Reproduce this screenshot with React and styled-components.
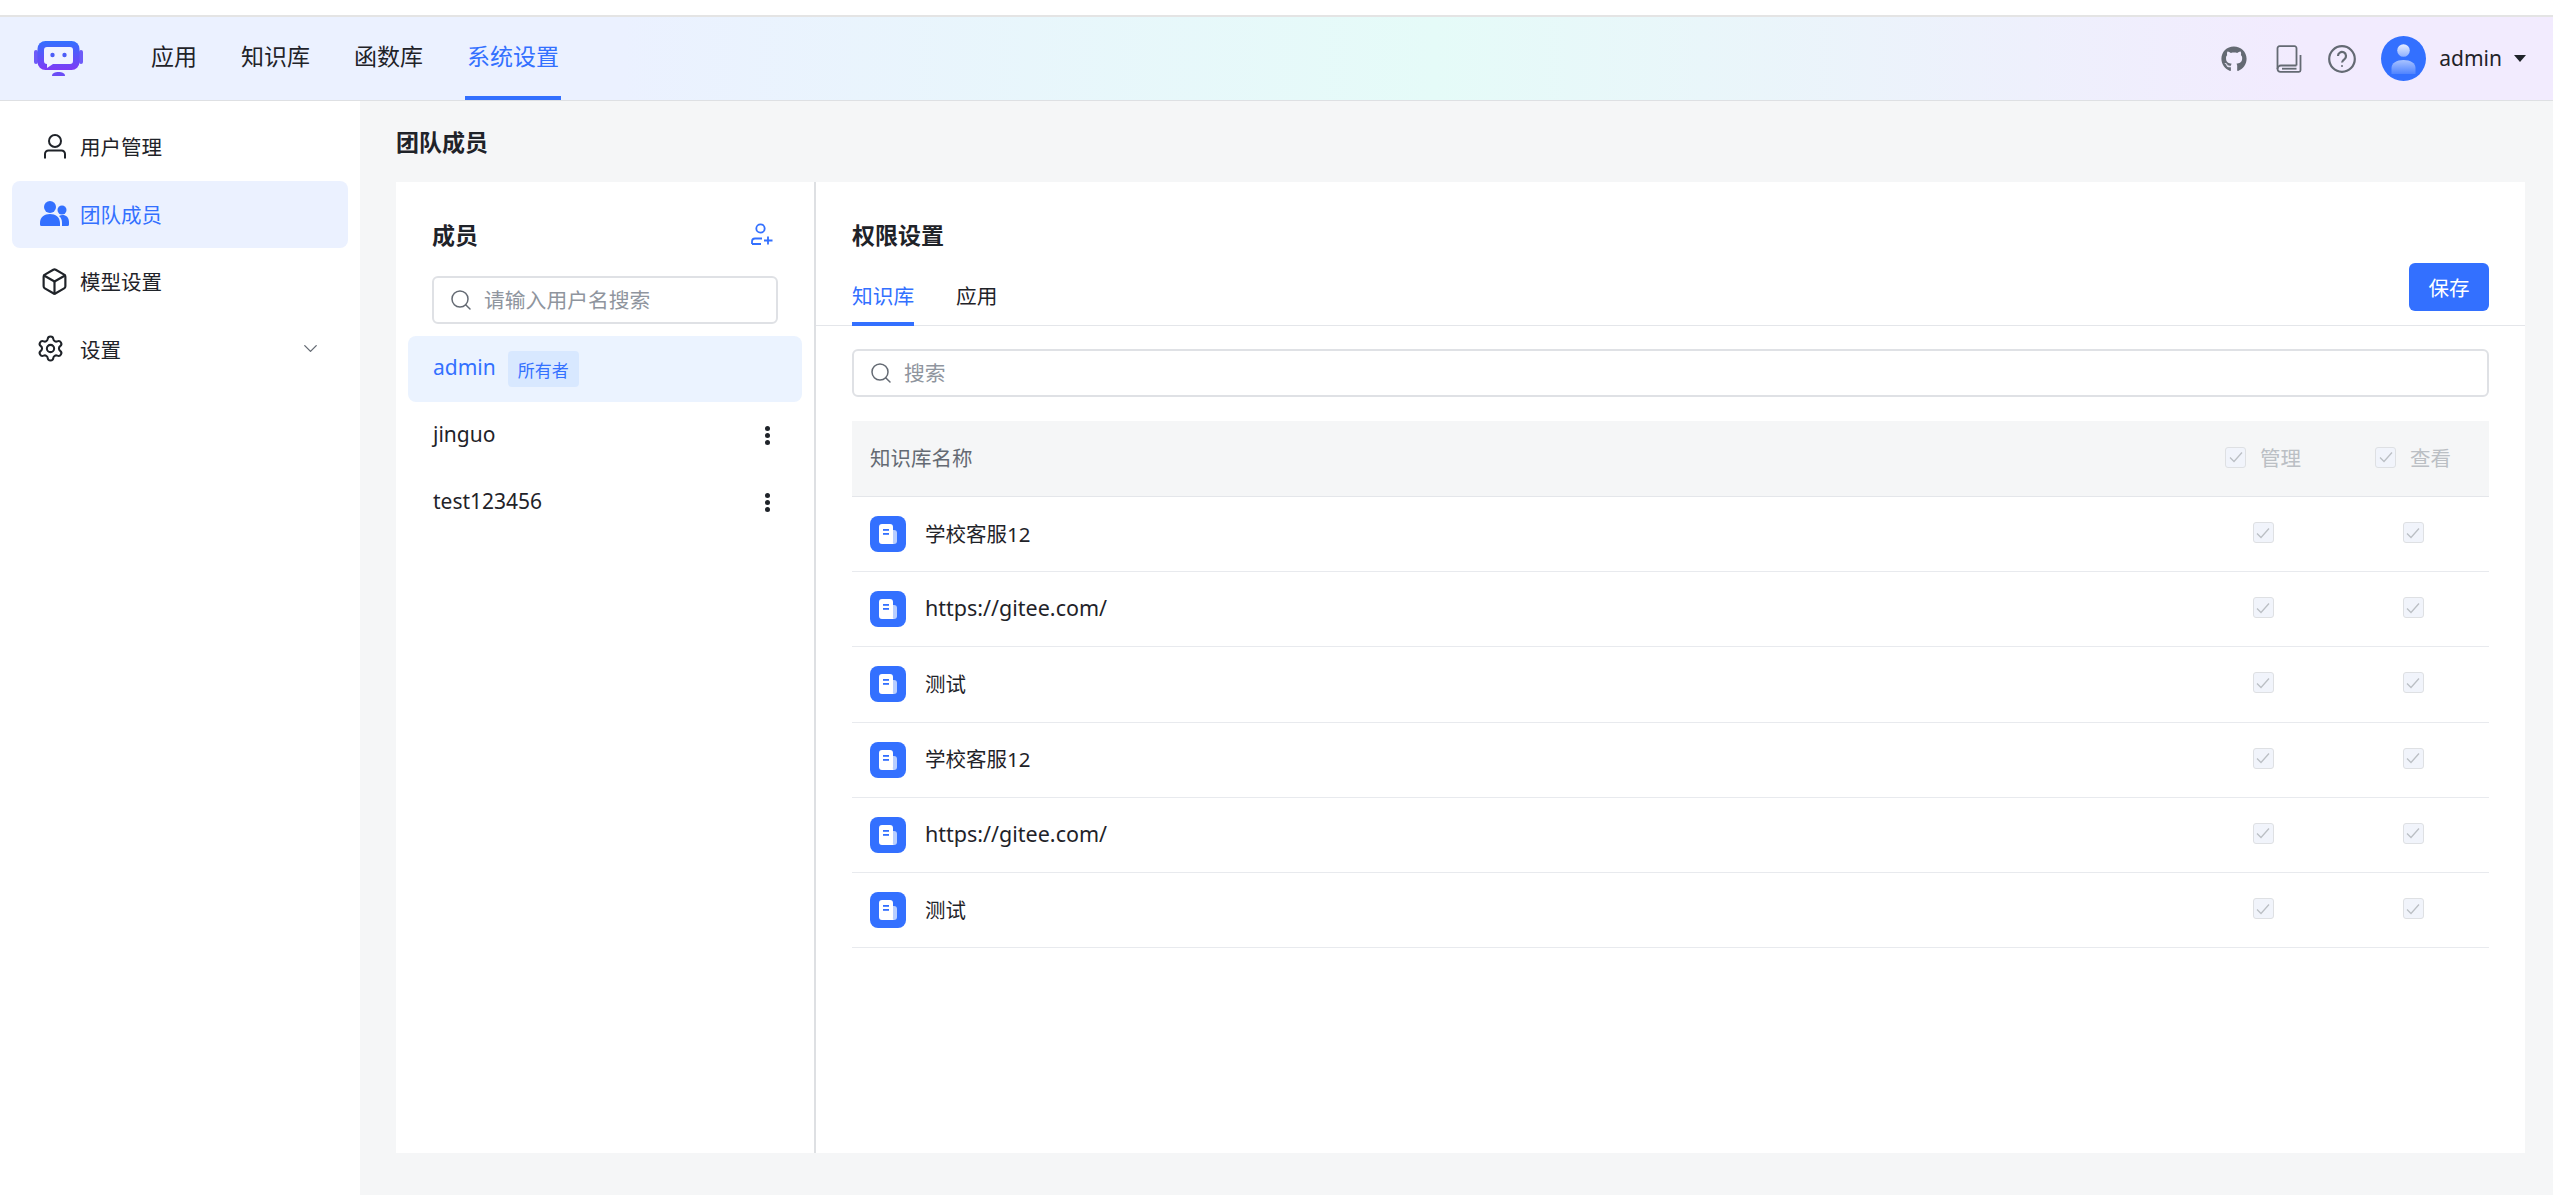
import React from 'react';
import styled, { createGlobalStyle } from 'styled-components';
import { FaGithub } from 'react-icons/fa';
import { Box, Settings, ChevronDown, Search } from 'lucide-react';

const GlobalStyle = createGlobalStyle`
	html, body {
		margin: 0;
		height: 100%;
		background: #fff;
	}
	* {
		box-sizing: border-box;
	}
	body {
		font-family: "Noto Sans", "Noto Sans CJK SC", sans-serif;
		font-size: 20.5px;
		color: #1f2329;
	}
`;

const Page = styled.div`
	height: 1195px;
	display: flex;
	flex-direction: column;
	overflow: hidden;
`;

const TopStrip = styled.div`
	height: 17px;
	flex: none;
	background: #fff;
	border-bottom: 2px solid #e4e4e4;
`;

const Header = styled.header`
	height: 84px;
	flex: none;
	display: flex;
	align-items: stretch;
	padding: 0 27px 0 34px;
	background: linear-gradient(90deg, #ebf1ff 24.34%, #e5fbf8 56.18%, #f2ebfe 90.18%);
	border-bottom: 1px solid #dee0e3;
`;

const Logo = styled.svg`
	width: 49px;
	height: 35px;
	align-self: center;
	margin-right: 66px;
	margin-top: -1px;
`;

const Nav = styled.nav`
	display: flex;
	gap: 40px;
`;

const NavItem = styled.div`
	display: flex;
	align-items: center;
	padding: 0 2px 4px;
	font-size: 23px;
	line-height: 1;
	color: ${p => (p.$active ? '#3370ff' : '#1f2329')};
	box-shadow: ${p => (p.$active ? 'inset 0 -4px 0 #3370ff' : 'none')};
`;

const HeaderRight = styled.div`
	margin-left: auto;
	display: flex;
	align-items: center;
	color: #646a73;
`;

const ToolIcon = styled.svg`
	display: block;
	width: ${p => p.$w || 28}px;
	height: 28px;
	margin-right: ${p => p.$mr || 0}px;
`;

const GithubIcon = styled(FaGithub)`
	display: block;
	width: 26px;
	height: 26px;
	margin-right: 29px;
`;

const Avatar = styled.svg`
	width: 45px;
	height: 45px;
	margin-left: 25px;
`;

const UserName = styled.span`
	margin-left: 13px;
	padding-bottom: 2px;
	font-size: 21px;
	color: #1f2329;
`;

const Caret = styled.span`
	width: 0;
	height: 0;
	margin-left: 12px;
	border-left: 6.5px solid transparent;
	border-right: 6.5px solid transparent;
	border-top: 7px solid #1f2329;
`;

const Body = styled.div`
	flex: 1;
	min-height: 0;
	display: flex;
`;

const Sidebar = styled.aside`
	width: 360px;
	flex: none;
	background: #fff;
	padding: 12px 12px 0;
`;

const MenuItem = styled.div`
	height: 67.5px;
	display: flex;
	align-items: center;
	padding: 0 26px 1px ${p => p.$pad || 28}px;
	border-radius: 8px;
	color: ${p => (p.$active ? '#3370ff' : '#1f2329')};
	background: ${p => (p.$active ? '#ebf1ff' : 'transparent')};
`;

const MenuIcon = styled.span`
	width: ${p => p.$w || 40}px;
	flex: none;
	display: flex;
	align-items: center;
	justify-content: flex-start;
`;

const MenuArrow = styled(ChevronDown)`
	margin-left: auto;
	color: #646a73;
`;

const Main = styled.main`
	flex: 1;
	min-width: 0;
	display: flex;
	flex-direction: column;
	padding: 0 28px 42px 36px;
	background: #f5f6f7;
`;

const PageTitle = styled.div`
	height: 81px;
	flex: none;
	display: flex;
	align-items: center;
	padding-bottom: 2px;
	font-size: 23px;
	font-weight: 700;
`;

const Card = styled.section`
	flex: 1;
	min-height: 0;
	display: flex;
	background: #fff;
`;

const MembersPanel = styled.div`
	width: 420px;
	flex: none;
	padding-top: 33px;
	border-right: 2px solid #dee0e3;
`;

const PanelHead = styled.div`
	height: 38px;
	display: flex;
	align-items: center;
	justify-content: space-between;
	padding: 0 41px 0 36px;
	font-size: 23px;
	font-weight: 700;
`;

const AddIcon = styled.svg`
	width: 22px;
	height: 22px;
	display: block;
`;

const SearchBox = styled.div`
	height: 48px;
	display: flex;
	align-items: center;
	padding: 0 15px 0 15px;
	gap: 11px;
	margin: ${p => p.$margin || 0};
	border: 2px solid #dfe1e5;
	border-radius: 6px;
	color: #646a73;
	background: #fff;
`;

const Placeholder = styled.span`
	padding-bottom: 3px;
	color: #8f959e;
	font-size: 20.8px;
`;

const MemberList = styled.div`
	padding: 12px 12px 0;
`;

const MemberRow = styled.div`
	height: 66px;
	margin-bottom: 1px;
	display: flex;
	align-items: center;
	padding: 0 32px 0 25px;
	border-radius: 8px;
	background: ${p => (p.$active ? '#ebf3ff' : 'transparent')};
	color: ${p => (p.$active ? '#3370ff' : '#1f2329')};
`;

const LatinName = styled.span`
	padding-bottom: 4px;
	font-size: 21px;
`;

const OwnerTag = styled.span`
	height: 36px;
	margin-left: 12px;
	padding: 0 10px;
	display: flex;
	align-items: center;
	border-radius: 4px;
	background: #d8e8ff;
	color: #3370ff;
	font-size: 17px;
`;

const Dots = styled.div`
	margin-left: auto;
	display: flex;
	flex-direction: column;
	gap: 2px;
	margin-bottom: 2px;

	i {
		display: block;
		width: 5px;
		height: 5px;
		border-radius: 50%;
		background: #1f2329;
	}
`;

const RightPanel = styled.div`
	flex: 1;
	min-width: 0;
	padding-top: 33px;
`;

const RightTitle = styled.div`
	height: 38px;
	display: flex;
	align-items: center;
	padding-left: 36px;
	font-size: 23px;
	font-weight: 700;
`;

const TabBar = styled.div`
	height: 73px;
	display: flex;
	align-items: flex-end;
	justify-content: space-between;
	padding: 0 36px;
	border-bottom: 1px solid #e4e6ea;
`;

const Tabs = styled.div`
	display: flex;
	gap: 42px;
`;

const Tab = styled.div`
	height: 56px;
	padding-bottom: 6px;
	display: flex;
	align-items: center;
	margin-bottom: -1px;
	font-size: 20.7px;
	color: ${p => (p.$active ? '#3370ff' : '#1f2329')};
	box-shadow: ${p => (p.$active ? 'inset 0 -4px 0 #3370ff' : 'none')};
`;

const SaveButton = styled.button`
	width: 80px;
	height: 48px;
	margin-bottom: 14px;
	border: 0;
	border-radius: 6px;
	background: #3370ff;
	color: #fff;
	font: inherit;
`;

const TableWrap = styled.div`
	margin: 23px 36px 0;
`;

const HeadRow = styled.div`
	height: 76px;
	margin-top: 24px;
	display: grid;
	grid-template-columns: 1fr 150px 150px;
	align-items: center;
	padding: 0 1px 0 18px;
	background: #f5f6f7;
	border-bottom: 1px solid #e4e6ea;
	color: #646a73;
`;

const HeadName = styled.div`
	padding-bottom: 3px;
`;

const Row = styled.div`
	height: 75.2px;
	display: grid;
	grid-template-columns: 1fr 150px 150px;
	align-items: center;
	padding: 0 1px 0 18px;
	border-bottom: 1px solid #e8eaee;
`;

const NameCell = styled.div`
	display: flex;
	align-items: center;
	gap: 19px;
`;

const RowName = styled.span`
	padding-bottom: 3px;
	font-size: ${p => (p.$latin ? 21.5 : 20.5)}px;
`;

const CheckCell = styled.div`
	display: flex;
	align-items: center;
	justify-content: center;
	gap: 14px;
	padding-bottom: 3px;
	color: #bbbfc4;
`;

const CheckBox = styled.span`
	width: 21px;
	height: 21px;
	display: flex;
	align-items: center;
	justify-content: center;
	border: 1.5px solid #dee0e3;
	border-radius: 3px;
	background: #f1f4fb;
	color: #bbbfc4;
`;

const DocBadge = styled.svg`
	width: 36px;
	height: 36px;
	display: block;
	flex: none;
`;

function UserIcon() {
	return (
		<svg width="24" height="25" viewBox="0 0 24 25" fill="none" stroke="#1f2329" strokeWidth="2">
			<circle cx="12" cy="7" r="6" />
			<path d="M2 24.5v-4.5a3.5 3.5 0 0 1 3.5-3.500h13a3.500 3.500 0 0 1 3.500 3.500v4.500" />
		</svg>
	);
}

function TeamIcon() {
	return (
		<svg width="29" height="25" viewBox="0 0 29 25" fill="#3370ff">
			<circle cx="10" cy="6" r="6" />
			<path d="M0 22c0-6 4.500-9 10-9s10 3 10 9v3H1.500A1.500 1.500 0 0 1 0 23.500z" />
			<circle cx="22" cy="9" r="4.500" />
			<path d="M22 25v-3c0-3-1-5.500-3-7 1-.700 2.200-1 3.500-1 3.600 0 6.500 2.500 6.500 7v2.500a1.500 1.500 0 0 1-1.500 1.500z" />
		</svg>
	);
}

function LogoMark() {
	return (
		<Logo viewBox="0 0 49 35">
			<defs>
				<linearGradient id="logoFill" x1="0" y1="0" x2="0" y2="1">
					<stop offset="0" stopColor="#3370ff" />
					<stop offset="1" stopColor="#7f3bf5" />
				</linearGradient>
			</defs>
			<rect x="0" y="9" width="4" height="14" rx="2" fill="#6d5bf8" />
			<rect x="45" y="9" width="4" height="14" rx="2" fill="#6d5bf8" />
			<rect x="3.500" y="0" width="42" height="29" rx="8" fill="url(#logoFill)" />
			<path d="M13 6h23a3 3 0 0 1 3 3v11a3 3 0 0 1-3 3H19l-6 4v-4a3 3 0 0 1-3-3V9a3 3 0 0 1 3-3z" fill="#f0f3ff" />
			<circle cx="18.500" cy="14" r="2.200" fill="#4c5cf7" />
			<circle cx="30.500" cy="14" r="2.200" fill="#4c5cf7" />
			<path d="M18 35c0-3 3-4 6.500-4s6.500 1 6.500 4z" fill="#6a4cf6" />
		</Logo>
	);
}

function AvatarMark() {
	return (
		<Avatar viewBox="0 0 45 45">
			<defs>
				<linearGradient id="avatarHead" x1="0" y1="0" x2="0" y2="1">
					<stop offset="0" stopColor="#e6edff" />
					<stop offset="1" stopColor="#8eb0ff" />
				</linearGradient>
				<linearGradient id="avatarBody" x1="0" y1="0" x2="0" y2="1">
					<stop offset="0" stopColor="#a9c3ff" />
					<stop offset="1" stopColor="#4f84ff" />
				</linearGradient>
			</defs>
			<circle cx="22.500" cy="22.500" r="22.500" fill="#3370ff" />
			<circle cx="22.500" cy="14.500" r="6.300" fill="url(#avatarHead)" />
			<path d="M10.500 38v-6c0-5 5-8 12-8s12 3 12 8v6z" fill="url(#avatarBody)" />
		</Avatar>
	);
}

function DocIcon() {
	return (
		<DocBadge viewBox="0 0 36 36">
			<rect width="36" height="36" rx="8" fill="#3370ff" />
			<rect x="19" y="14" width="8" height="14" rx="3" fill="#b9cfff" />
			<path d="M12 8h8a3 3 0 0 1 3 3v14a3 3 0 0 0 .500 3H12a3 3 0 0 1-3-3V11a3 3 0 0 1 3-3z" fill="#fff" />
			<rect x="13" y="13" width="6" height="1.800" fill="#3370ff" />
			<rect x="13" y="17" width="6" height="1.800" fill="#3370ff" />
		</DocBadge>
	);
}

function Check() {
	return (
		<CheckBox>
			<svg width="14" height="12" viewBox="0 0 14 12" fill="none" stroke="currentColor" strokeWidth="1.300">
				<path d="M1 6.500 5 10.500 13 1.500" />
			</svg>
		</CheckBox>
	);
}

const members = [
	{ name: 'admin', owner: true },
	{ name: 'jinguo' },
	{ name: 'test123456' }
];

const datasets = ['学校客服12', 'https://gitee.com/', '测试', '学校客服12', 'https://gitee.com/', '测试'];

export default function App() {
	return (
		<Page>
			<GlobalStyle />
			<TopStrip />
			<Header>
				<LogoMark />
				<Nav>
					<NavItem>应用</NavItem>
					<NavItem>知识库</NavItem>
					<NavItem>函数库</NavItem>
					<NavItem $active>系统设置</NavItem>
				</Nav>
				<HeaderRight>
					<GithubIcon />
					<ToolIcon $w={26} $mr={26} viewBox="0 0 26 28" fill="none" stroke="currentColor" strokeWidth="1.800">
						<path d="M20.500 20.500V3.200a2 2 0 0 0-2-2H3.500a2 2 0 0 0-2 2v20.800" />
						<path d="M1.500 24a3.500 3.500 0 0 1 3.500-3.500h15.500" />
						<path d="M1.500 24a3 3 0 0 0 3 2.800h18.500a1.500 1.500 0 0 0 1.500-1.500V10" />
						<path d="M6 23.700h14.500" />
					</ToolIcon>
					<ToolIcon viewBox="0 0 28 28" fill="none" stroke="currentColor" strokeWidth="2.200">
						<circle cx="14" cy="14" r="12.800" />
						<path d="M10 11a4 4 0 1 1 6.500 3.100c-1.500 1.100-2.500 1.900-2.500 3.400" />
						<circle cx="14" cy="21" r="1" fill="currentColor" stroke="none" />
					</ToolIcon>
					<AvatarMark />
					<UserName>admin</UserName>
					<Caret />
				</HeaderRight>
			</Header>
			<Body>
				<Sidebar>
					<MenuItem $pad={31}>
						<MenuIcon $w={37}><UserIcon /></MenuIcon>
						用户管理
					</MenuItem>
					<MenuItem $active>
						<MenuIcon><TeamIcon /></MenuIcon>
						团队成员
					</MenuItem>
					<MenuItem>
						<MenuIcon><Box size={29} strokeWidth={1.8} /></MenuIcon>
						模型设置
					</MenuItem>
					<MenuItem $pad={24}>
						<MenuIcon $w={44}><Settings size={29} strokeWidth={1.7} /></MenuIcon>
						设置
						<MenuArrow size={23} strokeWidth={1.4} />
					</MenuItem>
				</Sidebar>
				<Main>
					<PageTitle>团队成员</PageTitle>
					<Card>
						<MembersPanel>
							<PanelHead>
								成员
								<AddIcon viewBox="0 0 22 22" fill="none" stroke="#3370ff" strokeWidth="1.800">
									<circle cx="9.500" cy="5.500" r="4.200" />
									<path d="M1 21v-2.500a3 3 0 0 1 3-3h7" />
									<path d="M1 21h9M17 13.500v8M13 17.500h8.500" />
								</AddIcon>
							</PanelHead>
							<SearchBox $margin="23px 36px 0">
								<Search size={24} strokeWidth={1.5} />
								<Placeholder>请输入用户名搜索</Placeholder>
							</SearchBox>
							<MemberList>
								{members.map(m => (
									<MemberRow key={m.name} $active={m.owner}>
										<LatinName>{m.name}</LatinName>
										{m.owner ? <OwnerTag>所有者</OwnerTag> : <Dots><i /><i /><i /></Dots>}
									</MemberRow>
								))}
							</MemberList>
						</MembersPanel>
						<RightPanel>
							<RightTitle>权限设置</RightTitle>
							<TabBar>
								<Tabs>
									<Tab $active>知识库</Tab>
									<Tab>应用</Tab>
								</Tabs>
								<SaveButton>保存</SaveButton>
							</TabBar>
							<TableWrap>
								<SearchBox>
									<Search size={24} strokeWidth={1.5} />
									<Placeholder>搜索</Placeholder>
								</SearchBox>
								<HeadRow>
									<HeadName>知识库名称</HeadName>
									<CheckCell><Check />管理</CheckCell>
									<CheckCell><Check />查看</CheckCell>
								</HeadRow>
								{datasets.map((name, i) => (
									<Row key={i}>
										<NameCell>
											<DocIcon />
											<RowName $latin={name.startsWith('http')}>{name}</RowName>
										</NameCell>
										<CheckCell><Check /></CheckCell>
										<CheckCell><Check /></CheckCell>
									</Row>
								))}
							</TableWrap>
						</RightPanel>
					</Card>
				</Main>
			</Body>
		</Page>
	);
}
